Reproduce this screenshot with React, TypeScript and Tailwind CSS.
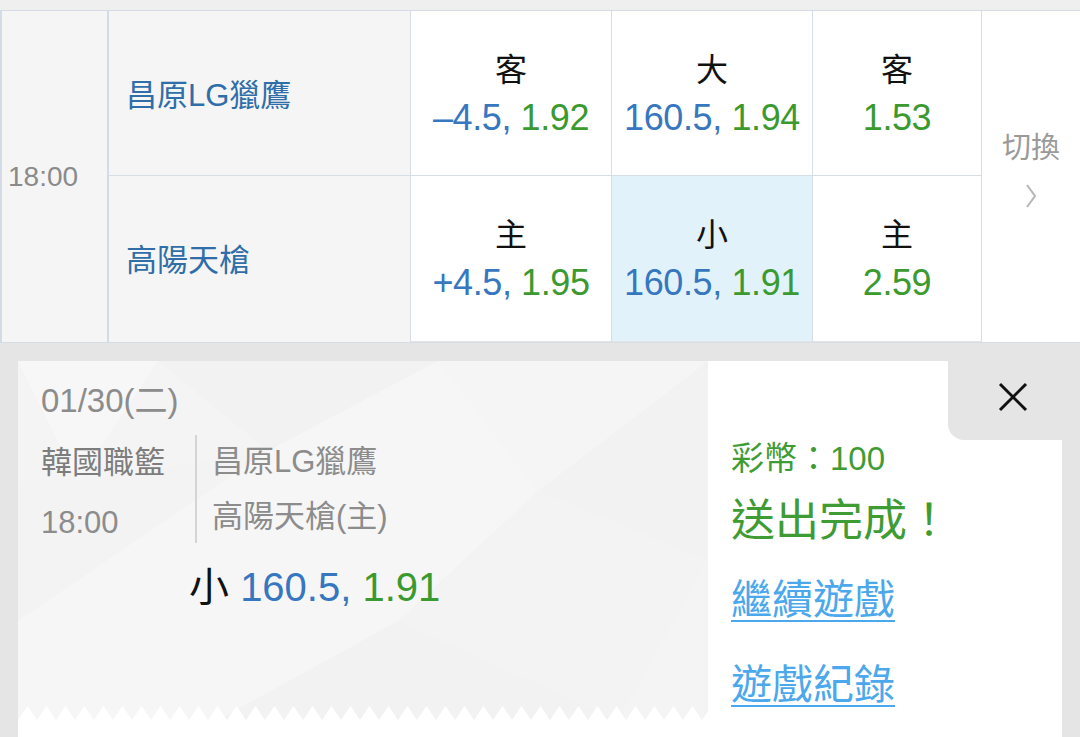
import React from "react";

const font = "font-['Liberation_Sans','Noto_Sans_CJK_TC',sans-serif]";

function OddsCell({
  label,
  blue,
  green,
  highlight,
  last,
}: {
  label: string;
  blue?: string;
  green: string;
  highlight?: boolean;
  last?: boolean;
}) {
  return (
    <div
      className={`h-[165px] flex flex-col items-center justify-center pt-[3px] ${
        highlight ? "bg-[#e1f2fb]" : "bg-white"
      } ${last ? "" : "border-b border-[#d6dde5]"}`}
    >
      <div className="text-[32px] leading-[46px] text-[#111]">{label}</div>
      <div className="text-[36px] leading-[50px] tracking-[-0.4px] whitespace-nowrap">
        {blue && <span className="text-[#3677c0]">{blue}, </span>}
        <span className="text-[#3b9a2f]">{green}</span>
      </div>
    </div>
  );
}

function Background() {
  return (
    <svg
      className="absolute inset-0 w-full h-full"
      viewBox="0 0 690 359"
      preserveAspectRatio="none"
    >
      <rect width="690" height="359" fill="#f4f4f4" />
      <polygon points="0,0 140,0 60,120" fill="#f7f7f7" />
      <polygon points="140,0 420,0 250,90" fill="#f2f2f2" />
      <polygon points="250,90 420,0 520,130" fill="#f6f6f6" />
      <polygon points="520,130 690,0 690,200" fill="#f2f2f2" />
      <polygon points="0,120 60,120 250,90 0,260" fill="#f3f3f3" />
      <polygon points="250,90 520,130 380,260" fill="#f6f6f6" />
      <polygon points="380,260 520,130 690,200 600,359" fill="#f3f3f3" />
      <polygon points="0,260 250,90 380,260 200,359 0,359" fill="#f6f6f6" />
      <polygon points="200,359 380,260 600,359" fill="#f2f2f2" />
      <polygon points="420,0 690,0 520,130" fill="#f5f5f5" />
    </svg>
  );
}

function Zigzag() {
  const teeth = [];
  for (let i = 0; i < 37; i++) {
    const x = i * 19;
    teeth.push(`${x},14 ${x + 9.5},0 ${x + 19},14`);
  }
  return (
    <svg
      className="absolute left-0 bottom-0 w-[690px] h-[14px]"
      viewBox="0 0 690 14"
    >
      {teeth.map((p, i) => (
        <polygon key={i} points={p} fill="#ffffff" />
      ))}
    </svg>
  );
}

export default function App() {
  return (
    <div className={`w-[1080px] h-[737px] overflow-hidden bg-[#e5e5e5] ${font}`}>
      {/* top strip */}
      <div className="h-[11px] bg-[#efefef] border-b border-[#d3dce6]" />

      {/* table */}
      <div className="flex h-[332px] border-b border-[#d6dde5]">
        <div className="w-[109px] bg-[#f5f5f5] border-l-2 border-r-2 border-[#d3dce6] flex items-center pl-[6px]">
          <span className="text-[28px] text-[#8a8a8a]">18:00</span>
        </div>
        <div className="w-[302px] bg-[#f5f5f5] border-r border-[#d6dde5] flex flex-col">
          <div className="h-[165px] border-b border-[#d6dde5] flex items-center pl-[17px] pt-[6px]">
            <span className="text-[31px] text-[#2f6ea8]">昌原LG獵鷹</span>
          </div>
          <div className="h-[165px] flex items-center pl-[17px] pt-[6px]">
            <span className="text-[31px] text-[#2f6ea8]">高陽天槍</span>
          </div>
        </div>
        <div className="w-[201px] border-r border-[#d6dde5] flex flex-col">
          <OddsCell label="客" blue="–4.5" green="1.92" />
          <OddsCell label="主" blue="+4.5" green="1.95" last />
        </div>
        <div className="w-[201px] border-r border-[#d6dde5] flex flex-col">
          <OddsCell label="大" blue="160.5" green="1.94" />
          <OddsCell label="小" blue="160.5" green="1.91" highlight last />
        </div>
        <div className="w-[169px] border-r border-[#d6dde5] flex flex-col">
          <OddsCell label="客" green="1.53" />
          <OddsCell label="主" green="2.59" last />
        </div>
        <div className="flex-1 bg-white flex flex-col items-center justify-center pb-[16px]">
          <div className="text-[29px] leading-[40px] text-[#9a9a9a]">切換</div>
          <svg width="14" height="26" viewBox="0 0 14 26" className="mt-[15px]">
            <polyline
              points="3,2 11,13 3,24"
              fill="none"
              stroke="#b5b5b5"
              strokeWidth="2"
            />
          </svg>
        </div>
      </div>

      {/* panel */}
      <div className="mt-[18px] mx-[18px] bg-white h-[400px] relative flex">
        <div className="relative w-[690px] h-[359px] overflow-hidden">
          <Background />
          <Zigzag />
          <div className="relative pl-[23px] pt-[20px]">
            <div className="text-[33px] leading-[40px] text-[#8c8c8c]">01/30(二)</div>
            <div className="flex mt-[14px] h-[108px]">
              <div className="w-[154px] flex flex-col">
                <div className="text-[31px] leading-[50px] text-[#7d7d7d] mt-[3px]">韓國職籃</div>
                <div className="text-[31px] leading-[50px] text-[#8c8c8c] mt-[10px]">18:00</div>
              </div>
              <div className="w-[2px] h-[108px] bg-[#d4d4d4]" />
              <div className="flex flex-col pl-[15px]">
                <div className="text-[31px] leading-[50px] text-[#8c8c8c] mt-[2px]">昌原LG獵鷹</div>
                <div className="text-[31px] leading-[50px] text-[#8c8c8c] mt-[5px]">高陽天槍(主)</div>
              </div>
            </div>
            <div className="ml-[148px] mt-[19px] text-[40px] leading-[50px] whitespace-nowrap">
              <span className="text-[#111]">小 </span>
              <span className="text-[#3677c0]">160.5, </span>
              <span className="text-[#3b9a2f]">1.91</span>
            </div>
          </div>
        </div>
        <div className="flex-1 flex flex-col pl-[23px] pt-[78px]">
          <div className="text-[33px] leading-[40px] text-[#3f9c35]">彩幣：100</div>
          <div className="text-[44px] leading-[56px] text-[#3f9c35] mt-[14px]">送出完成！</div>
          <div className="text-[41px] leading-[50px] text-[#4ba8ec] underline decoration-2 underline-offset-[6px] mt-[26px] w-fit">
            繼續遊戲
          </div>
          <div className="text-[41px] leading-[50px] text-[#4ba8ec] underline decoration-2 underline-offset-[6px] mt-[35px] w-fit">
            遊戲紀錄
          </div>
        </div>
        <button className="absolute top-0 right-0 w-[114px] h-[79px] bg-[#e5e5e5] rounded-bl-[16px] flex items-center justify-center pl-[16px] pb-[8px]">
          <svg width="30" height="30" viewBox="0 0 30 30">
            <line x1="2" y1="2" x2="28" y2="28" stroke="#111" strokeWidth="3" />
            <line x1="28" y1="2" x2="2" y2="28" stroke="#111" strokeWidth="3" />
          </svg>
        </button>
      </div>
    </div>
  );
}
